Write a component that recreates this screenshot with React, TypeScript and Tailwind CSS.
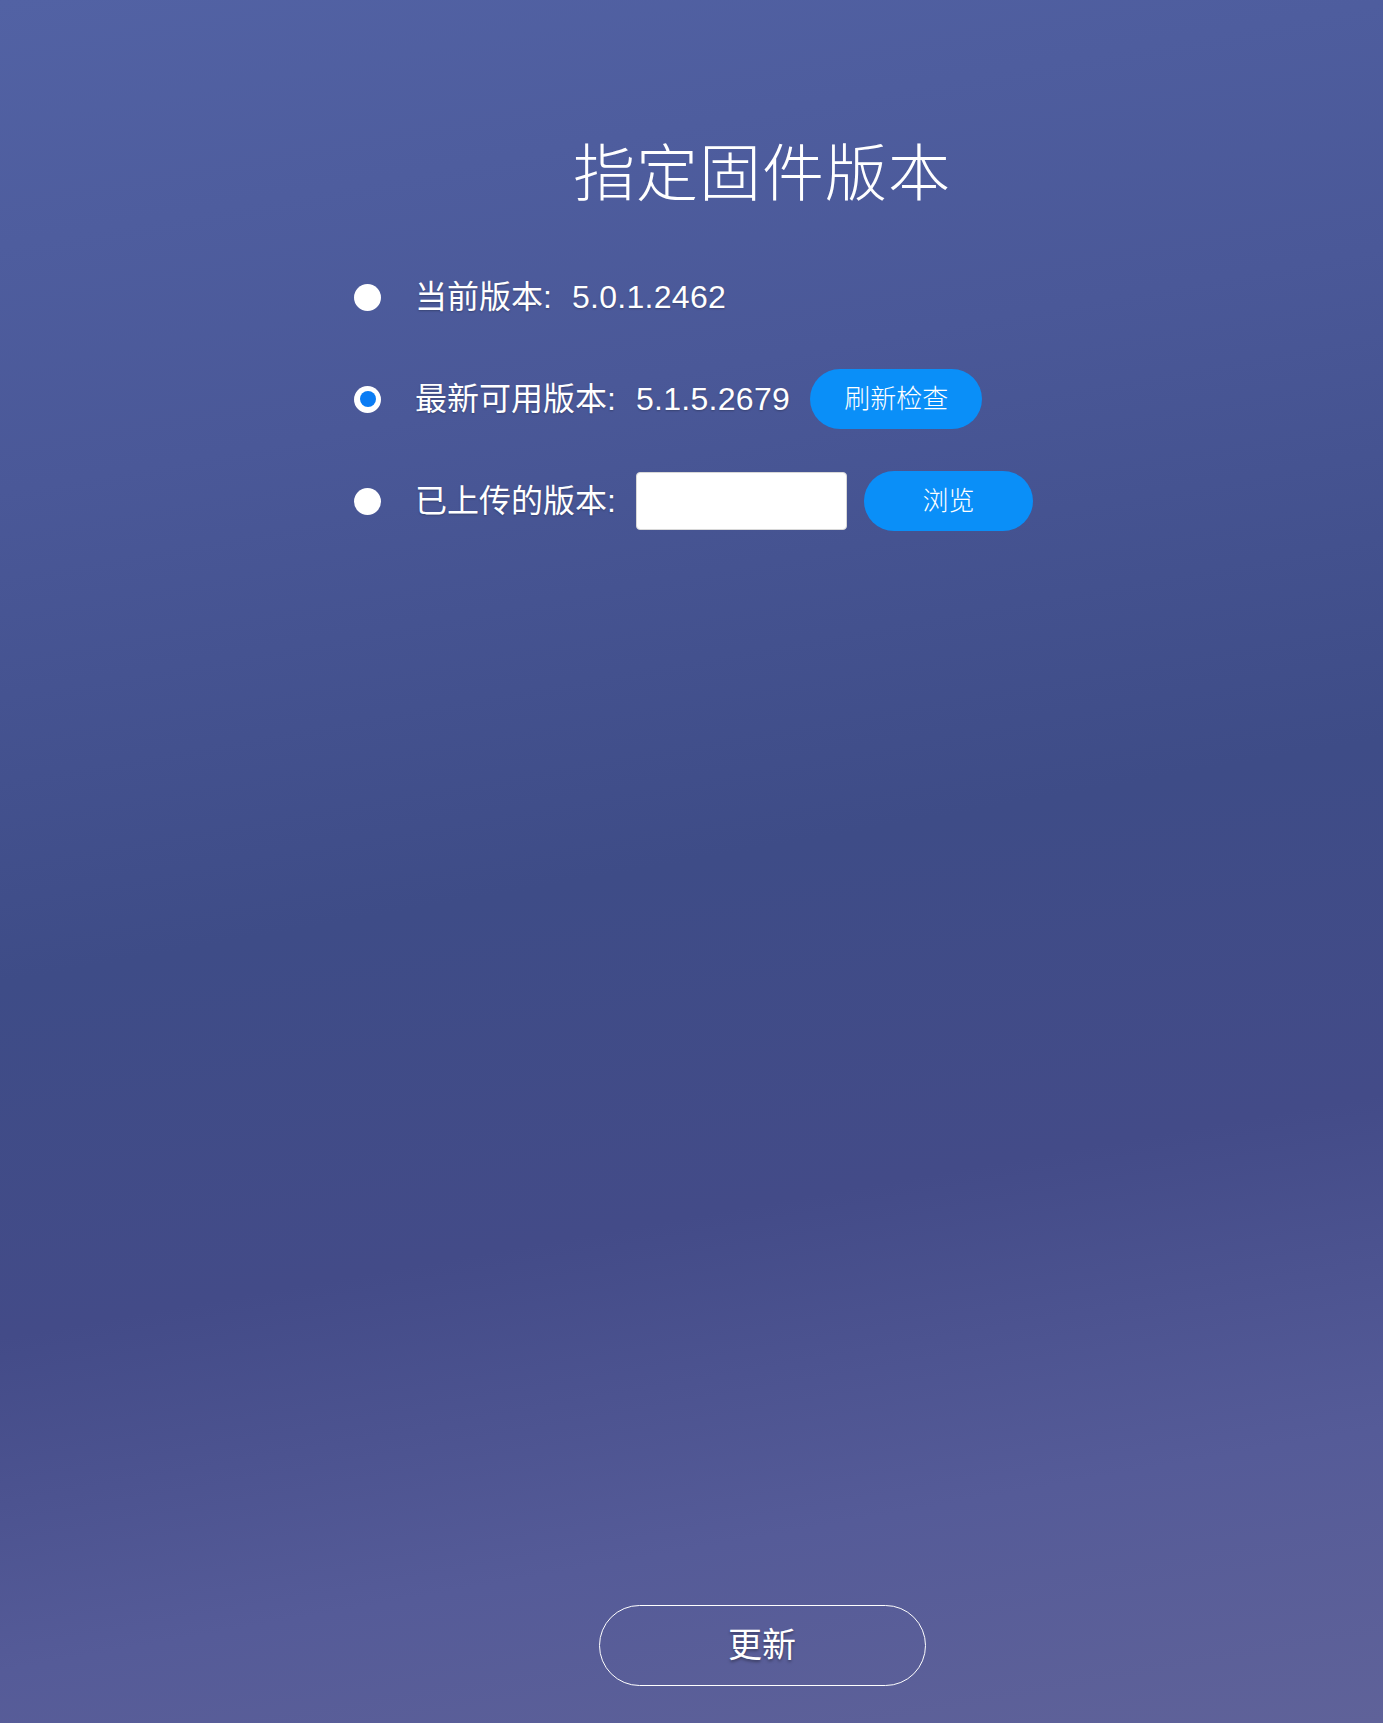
import React from 'react';

const font = 'font-["Liberation_Sans","Noto_Sans_CJK_SC",sans-serif]';

const Radio: React.FC<{ checked?: boolean }> = ({ checked }) => (
  <span className="flex h-[27px] w-[27px] shrink-0 items-center justify-center rounded-full bg-white">
    {checked && <span className="h-[16px] w-[16px] rounded-full bg-[#0a7cf4]" />}
  </span>
);

const App: React.FC = () => {
  return (
    <div
      className={`flex h-[1723px] w-full flex-col bg-[linear-gradient(170deg,#5262a4_0%,#4a5898_25%,#3e4c87_50%,#434b88_68%,#555b98_85%,#5f6299_100%)] pl-[141px] text-white ${font}`}
    >
      <h1 className="mt-[144px] text-center text-[62px] leading-[62px] font-light tracking-[1px]">
        指定固件版本
      </h1>

      <div className="mt-[61px] flex flex-col gap-[42px] pl-[213px] text-[32px] [text-shadow:0_1px_2px_rgba(0,0,0,0.25)]">
        <div className="flex h-[60px] items-center">
          <Radio />
          <span className="ml-[34px]">当前版本:</span>
          <span className="ml-[20px] tracking-[0.3px]">5.0.1.2462</span>
        </div>

        <div className="flex h-[60px] items-center">
          <Radio checked />
          <span className="ml-[34px]">最新可用版本:</span>
          <span className="ml-[20px] tracking-[0.3px]">5.1.5.2679</span>
          <button className="ml-[20px] h-[60px] w-[172px] rounded-full bg-[#0a8ff8] text-[26px] font-light text-white">
            刷新检查
          </button>
        </div>

        <div className="flex h-[60px] items-center">
          <Radio />
          <span className="ml-[34px]">已上传的版本:</span>
          <input
            type="text"
            className="ml-[20px] h-[58px] w-[211px] rounded-[4px] border border-[#d8d8d8] bg-white px-3 text-[20px] text-black outline-none"
          />
          <button className="ml-[17px] h-[60px] w-[169px] rounded-full bg-[#0a8ff8] text-[26px] font-light text-white">
            浏览
          </button>
        </div>
      </div>

      <div className="mt-auto mb-[37px] flex justify-center">
        <button className="h-[81px] w-[327px] rounded-full border border-white text-[34px] text-white [text-shadow:0_2px_3px_rgba(0,0,0,0.35)]">
          更新
        </button>
      </div>
    </div>
  );
};

export default App;
